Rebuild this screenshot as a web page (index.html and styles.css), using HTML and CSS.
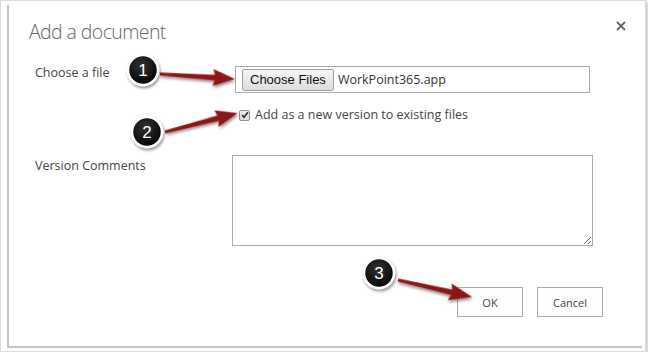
FILE: index.html
```html
<!DOCTYPE html>
<html>
<head>
  <title>Add a document</title>
  <link rel="stylesheet" href="styles.css">
</head>
<body>
  <div class="frame">
    <div class="dialog">
      <div class="dialog-head">
        <h1 class="dialog-title">Add a document</h1>
        <span class="close">
          <svg width="10" height="10" viewBox="0 0 10 10"><path d="M1 1L9 9M9 1L1 9" stroke="#666" stroke-width="1.8"/></svg>
        </span>
      </div>

      <div class="form">
        <div class="row row-file">
          <label class="field-label">Choose a file</label>
          <div class="file-input">
            <span class="file-btn">Choose Files</span>
            <span class="file-name">WorkPoint365.app</span>
          </div>
        </div>

        <div class="row row-check">
          <span></span>
          <label class="check">
            <span class="check-box">
              <svg width="8" height="8" viewBox="0 0 9 9"><path d="M1.2 4.6L3.4 7L7.8 1.4" fill="none" stroke="#333" stroke-width="2"/></svg>
            </span>
            Add as a new version to existing files
          </label>
        </div>

        <div class="row row-comments">
          <label class="field-label">Version Comments</label>
          <textarea class="comments"></textarea>
        </div>

        <div class="actions">
          <button class="btn">OK</button>
          <button class="btn">Cancel</button>
        </div>
      </div>
    </div>

    <!-- numbered callouts drawn over the dialog -->
    <svg class="callouts" width="648" height="356" viewBox="0 0 648 356">
      <defs>
        <filter id="shadow" x="-30%" y="-30%" width="160%" height="170%">
          <feDropShadow dx="1" dy="2" stdDeviation="1.6" flood-color="#000" flood-opacity="0.45"/>
        </filter>
        <radialGradient id="ball" cx="45%" cy="35%" r="70%">
          <stop offset="0" stop-color="#333"/>
          <stop offset="1" stop-color="#000"/>
        </radialGradient>
      </defs>

      <g class="arrow" transform="translate(160 74) rotate(3.8)">
        <path d="M0 -1.6L55 -2.8L53 -8.5L75 0L53 8.5L55 2.8L0 1.6Z"/>
      </g>
      <g class="arrow" transform="translate(165 132) rotate(-14.6)">
        <path d="M0 -1.6L55 -2.8L53 -8.5L75 0L53 8.5L55 2.8L0 1.6Z"/>
      </g>
      <g class="arrow" transform="translate(398 280) rotate(12.9)">
        <path d="M0 -1.6L55 -2.8L53 -8.5L76 0L53 8.5L55 2.8L0 1.6Z"/>
      </g>

      <g class="badge">
        <circle cx="143" cy="70" r="15"/>
        <text x="143" y="76">1</text>
      </g>
      <g class="badge">
        <circle cx="147" cy="132" r="15"/>
        <text x="147" y="138">2</text>
      </g>
      <g class="badge">
        <circle cx="379" cy="273" r="15"/>
        <text x="379" y="279">3</text>
      </g>
    </svg>
  </div>
</body>
</html>
```

FILE: styles.css
```css
/* Add a document dialog */
body {
  margin: 0;
  background-color: #fff;
  font-family: 'Open Sans', 'Liberation Sans', sans-serif;
}

.frame {
  position: relative;
  width: 644px;
  height: 350px;
  border: 1px solid #dcdcdc;
  box-shadow: 2px 2px 3px rgba(0, 0, 0, 0.22);
  background-color: #fff;
}

.dialog {
  margin: 4px 0 0 6px;
  width: 635px;
  height: 343px;
  box-sizing: border-box;
  border-left: 2px solid #c4c4c4;
  border-bottom: 2px solid #c4c4c4;
  padding: 13px 16px 0 20px;
}

.dialog-head {
  display: flex;
  justify-content: space-between;
  align-items: flex-start;
}

.dialog-title {
  margin: 0;
  font-size: 19.5px;
  font-weight: 300;
  letter-spacing: -0.6px;
  line-height: 28px;
  color: #666;
}

.close {
  display: flex;
  margin-top: 3px;
}

.form {
  margin: 20px 0 0 6px;
  width: 568px;
}

.row {
  display: grid;
  grid-template-columns: 197px 361px;
}

.field-label {
  font-size: 12.5px;
  line-height: 14px;
  color: #444;
}

/* file picker */
.file-input {
  margin-left: 3px;
  width: 355px;
  height: 27px;
  box-sizing: border-box;
  border: 1px solid #ababab;
  display: flex;
  align-items: center;
  padding-left: 6px;
}

.file-btn {
  font-family: 'Liberation Sans', Arial, sans-serif;
  font-size: 13px;
  color: #111;
  height: 22px;
  line-height: 20px;
  box-sizing: border-box;
  padding: 0 7px;
  border: 1px solid #a0a0a0;
  border-radius: 2px;
  background: linear-gradient(#f6f6f6, #dddddd);
}

.file-name {
  margin-left: 4px;
  font-size: 12.5px;
  color: #333;
}

/* checkbox */
.row-check {
  margin-top: 14px;
}

.check {
  display: flex;
  align-items: center;
  padding-left: 7px;
  font-size: 12.5px;
  line-height: 16px;
  color: #444;
}

.check-box {
  width: 9px;
  height: 9px;
  margin-right: 5px;
  border: 1px solid #8f8f8f;
  border-radius: 2px;
  background: linear-gradient(#f0f0f0, #d8d8d8);
  display: flex;
  align-items: center;
  justify-content: center;
}

/* comments */
.row-comments {
  margin-top: 32px;
}

.row-comments .field-label {
  padding-top: 4px;
}

.comments {
  width: 361px;
  height: 91px;
  box-sizing: border-box;
  border: 1px solid #ababab;
  margin: 0;
  font-family: inherit;
}

/* buttons */
.actions {
  margin-top: 41px;
  display: flex;
  justify-content: flex-end;
  gap: 14px;
}

.btn {
  width: 66px;
  height: 30px;
  border: 1px solid #ababab;
  background-color: #fdfdfd;
  color: #444;
  font-family: inherit;
  font-size: 11px;
  padding: 0;
}

/* callouts */
.callouts {
  position: absolute;
  top: -1px;
  left: -1px;
}

.arrow path {
  fill: #8e1616;
  filter: url(#shadow);
}

.badge circle {
  fill: url(#ball);
  stroke: #fff;
  stroke-width: 2.5;
  filter: url(#shadow);
}

.badge text {
  fill: #fff;
  font-family: 'Liberation Sans', Arial, sans-serif;
  font-size: 17px;
  text-anchor: middle;
}
```
